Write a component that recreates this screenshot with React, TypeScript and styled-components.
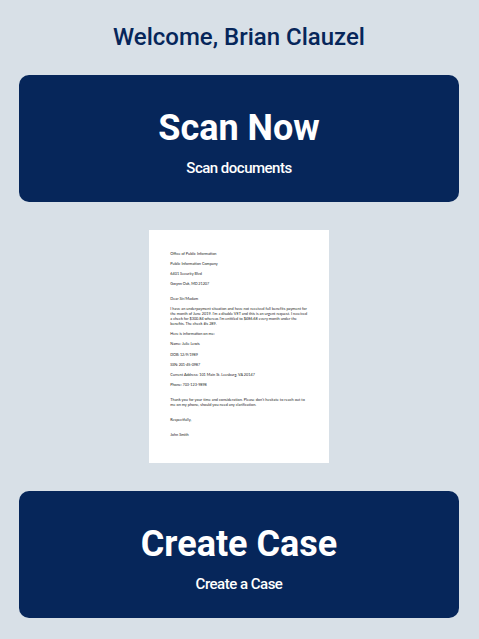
import React from "react";
import styled, { createGlobalStyle } from "styled-components";

const GlobalStyle = createGlobalStyle`
  * { box-sizing: border-box; }
  body {
    margin: 0;
    background: #d8e0e7;
    font-family: Roboto, sans-serif;
  }
`;

const Page = styled.main`
  min-height: 639px;
  padding: 23px 20px 21px 19px;
  display: flex;
  flex-direction: column;
  align-items: center;
  background: #d8e0e7;
`;

const Welcome = styled.h1`
  margin: 0 0 24px;
  font-size: 24px;
  line-height: 28px;
  font-weight: 500;
  color: #06265a;
`;

const ActionCard = styled.button`
  width: 100%;
  height: 127px;
  padding: 5px 0 0;
  display: flex;
  flex-direction: column;
  align-items: center;
  justify-content: center;
  gap: 9px;
  border: 0;
  border-radius: 10px;
  background: #06265a;
  color: #fff;
  font-family: inherit;
`;

const ActionTitle = styled.span`
  font-size: 36px;
  line-height: 44px;
  font-weight: 700;
`;

const ActionCaption = styled.span`
  font-size: 15px;
  line-height: 18px;
  font-weight: 500;
  letter-spacing: -0.5px;
`;

const Letter = styled.article`
  width: 180px;
  height: 233px;
  margin: 28px 0;
  padding: 21px 0 0 21.3px;
  background: #fff;
  color: #222;
  font-family: Lato, sans-serif;
  font-size: 3.8px;
  line-height: 5.03px;
`;

const Line = styled.div<{ $before: number; $spacing?: number }>`
  margin-top: ${(p) => p.$before * 5.03}px;
  letter-spacing: ${(p) => p.$spacing ?? 0}px;
  white-space: nowrap;
`;

const letterLines: { text: string; before: number; spacing?: number }[] = [
  { text: "Office of Public Information", before: 0 },
  { text: "Public Information Company", before: 1 },
  { text: "6401 Security Blvd", before: 1 },
  { text: "Gwynn Oak, MD 21207", before: 1, spacing: -0.06 },
  { text: "Dear Sir/Madam", before: 2, spacing: 0.03 },
  { text: "I have an underpayment situation and have not received full benefits payment for", before: 1, spacing: 0.02 },
  { text: "the month of June 2019. I'm a disable VET and this is an urgent request. I received", before: 0, spacing: 0.01 },
  { text: "a check for $300.84 whereas I'm entitled to $486.68 every month under the", before: 0 },
  { text: "benefits. The check #is 289.", before: 0 },
  { text: "Here is information on me:", before: 1 },
  { text: "Name: Julie Lewis", before: 1 },
  { text: "DOB: 12/9/1989", before: 1, spacing: -0.12 },
  { text: "SSN: 201-45-0987", before: 1, spacing: -0.12 },
  { text: "Current Address: 101 Main St. Leesburg, VA 20147", before: 1 },
  { text: "Phone: 703-123-9898", before: 1, spacing: -0.05 },
  { text: "Thank you for your time and consideration. Please don't hesitate to reach out to", before: 2, spacing: 0.03 },
  { text: "me on my phone, should you need any clarification.", before: 0, spacing: 0.02 },
  { text: "Respectfully,", before: 2 },
  { text: "John Smith", before: 2 },
];

export default function App() {
  return (
    <>
      <GlobalStyle />
      <Page>
        <Welcome>Welcome, Brian Clauzel</Welcome>
        <ActionCard>
          <ActionTitle>Scan Now</ActionTitle>
          <ActionCaption>Scan documents</ActionCaption>
        </ActionCard>
        <Letter>
          {letterLines.map((l) => (
            <Line key={l.text} $before={l.before} $spacing={l.spacing}>
              {l.text}
            </Line>
          ))}
        </Letter>
        <ActionCard>
          <ActionTitle>Create Case</ActionTitle>
          <ActionCaption>Create a Case</ActionCaption>
        </ActionCard>
      </Page>
    </>
  );
}
